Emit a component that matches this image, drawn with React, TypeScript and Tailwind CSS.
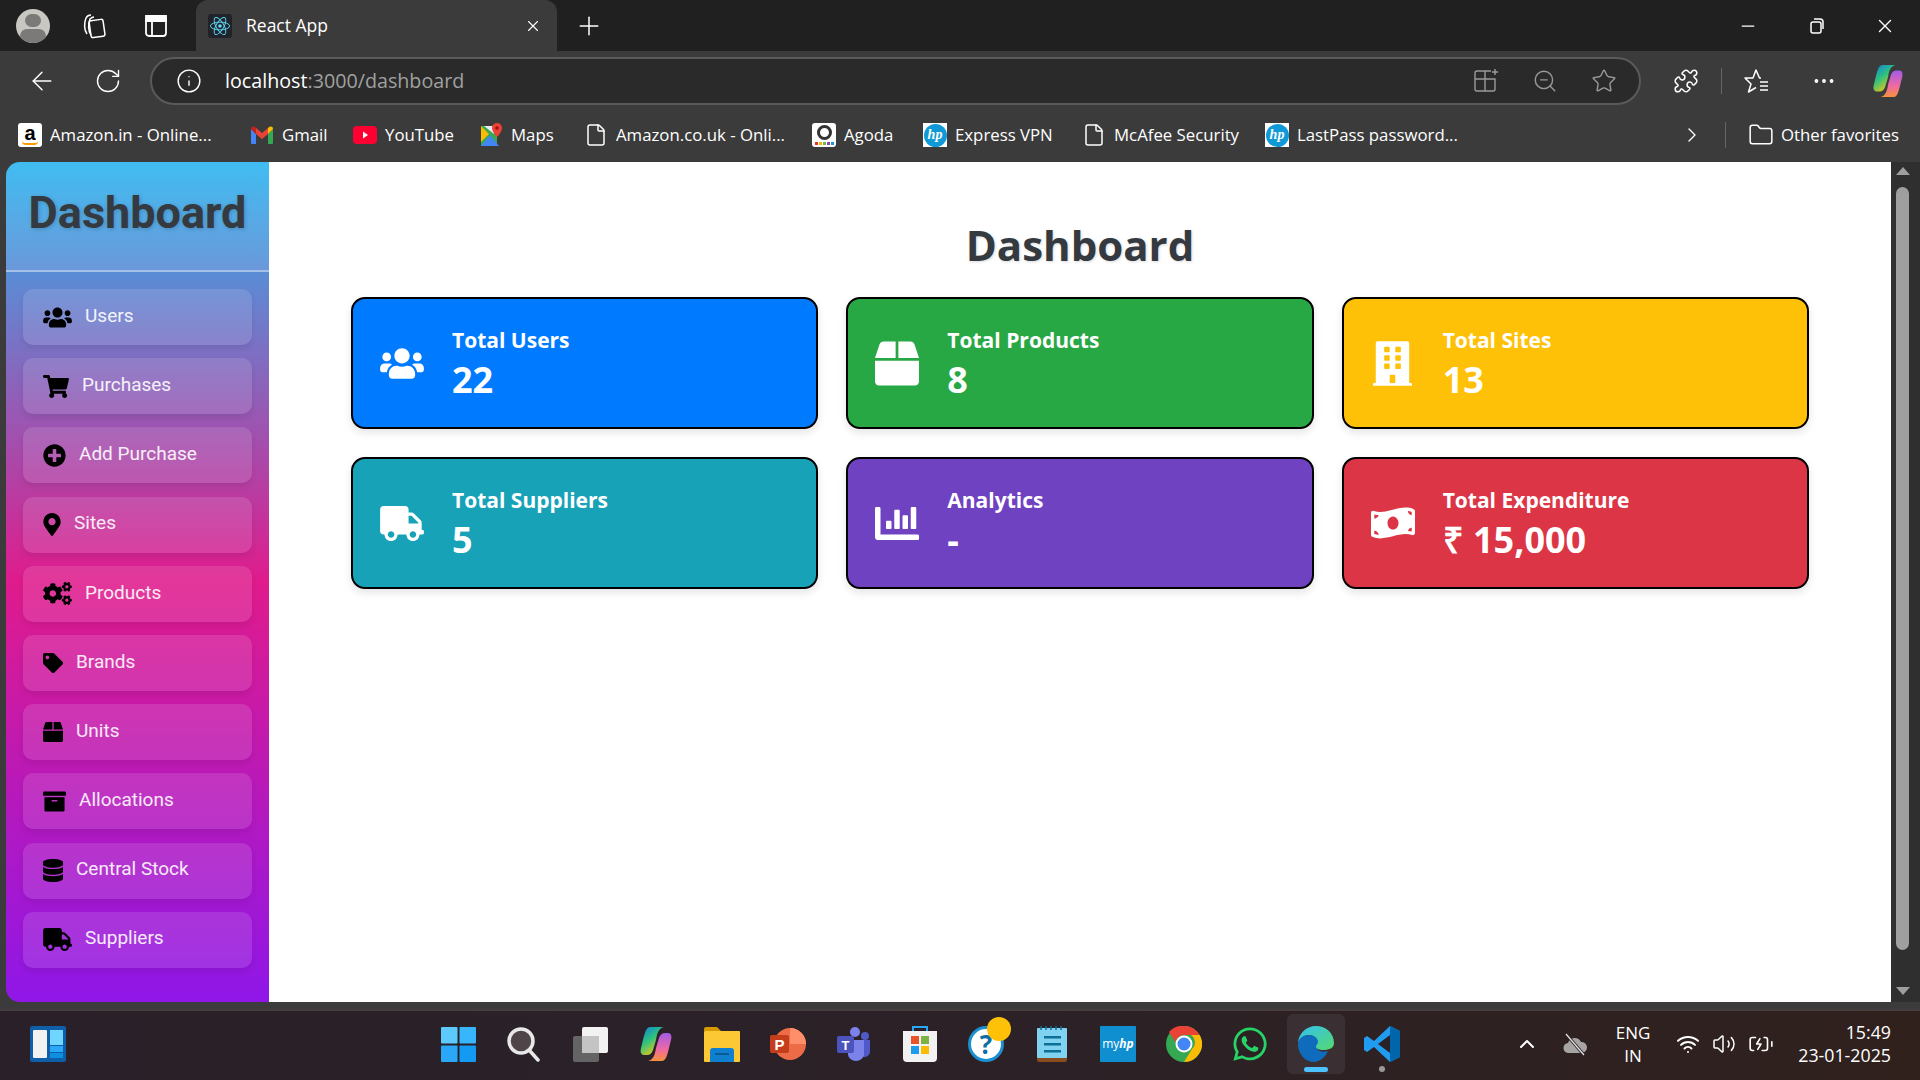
import React from 'react';
import {
  ArrowLeft, BatteryCharging, ChevronRight, ChevronUp, File, Folder, Info, Minus, MoreHorizontal,
  Plus, Puzzle, RotateCw, Star, Volume2, Wifi, X, ZoomOut,
} from 'lucide-react';
import {
  FaArchive, FaBox, FaBuilding, FaChartBar, FaCogs, FaDatabase, FaMapMarkerAlt, FaMoneyBillWave,
  FaPlusCircle, FaShoppingCart, FaTag, FaTruck, FaUsers, FaWhatsapp,
} from 'react-icons/fa';

const ui = "font-['Open_Sans',sans-serif]";

const menu = [
  { label: 'Users', icon: <FaUsers className="w-[29px] h-[23px]" /> },
  { label: 'Purchases', icon: <FaShoppingCart className="w-[26px] h-[23px]" /> },
  { label: 'Add Purchase', icon: <FaPlusCircle className="w-[23px] h-[23px]" /> },
  { label: 'Sites', icon: <FaMapMarkerAlt className="w-[18px] h-[23px]" /> },
  { label: 'Products', icon: <FaCogs className="w-[29px] h-[23px]" /> },
  { label: 'Brands', icon: <FaTag className="w-[20px] h-[20px]" /> },
  { label: 'Units', icon: <FaBox className="w-[20px] h-[20px]" /> },
  { label: 'Allocations', icon: <FaArchive className="w-[23px] h-[23px]" /> },
  { label: 'Central Stock', icon: <FaDatabase className="w-[20px] h-[23px]" /> },
  { label: 'Suppliers', icon: <FaTruck className="w-[29px] h-[23px]" /> },
];

const cards = [
  { title: 'Total Users', value: '22', bg: 'bg-[#007bff]', icon: <FaUsers className="w-[44px] h-[35px]" /> },
  { title: 'Total Products', value: '8', bg: 'bg-[#28a745]', icon: <FaBox className="w-[44px] h-[45px]" /> },
  { title: 'Total Sites', value: '13', bg: 'bg-[#ffc107]', icon: <FaBuilding className="w-[39px] h-[45px]" /> },
  { title: 'Total Suppliers', value: '5', bg: 'bg-[#17a2b8]', icon: <FaTruck className="w-[44px] h-[35px]" /> },
  { title: 'Analytics', value: '-', bg: 'bg-[#6f42c1]', icon: <FaChartBar className="w-[44px] h-[45px]" /> },
  { title: 'Total Expenditure', value: '₹ 15,000', bg: 'bg-[#dc3545]', icon: <FaMoneyBillWave className="w-[45px] h-[36px]" /> },
];

const AmazonIcon = () => (
  <div className="relative w-[24px] h-[24px] bg-white rounded-[3px] flex items-center justify-center text-black text-[20px] font-bold leading-none font-['Liberation_Sans',sans-serif] pb-[5px]">
    a
    <div className="absolute bottom-[2px] left-[4px] w-[16px] h-[4px] border-b-2 border-[#f90] rounded-b-full" />
  </div>
);

const GmailIcon = () => (
  <svg width="24" height="20" viewBox="0 0 24 20">
    <path d="M1 4v14a1 1 0 0 0 1 1h4V9z" fill="#4285f4" />
    <path d="M23 4v14a1 1 0 0 1-1 1h-4V9z" fill="#34a853" />
    <path d="M6 9v10h0V9l6 5 6-5V3l-6 5-6-5z" fill="#ea4335" />
    <path d="M1 4c0-3 3-3 5-1v6z" fill="#c5221f" />
    <path d="M23 4c0-3-3-3-5-1v6z" fill="#fbbc04" />
  </svg>
);

const YoutubeIcon = () => (
  <svg width="24" height="18" viewBox="0 0 24 18">
    <rect width="24" height="18" rx="4" fill="#ff0033" />
    <path d="M10 5.500l5 3.500-5 3.500z" fill="#fff" />
  </svg>
);

const MapsIcon = () => (
  <svg width="22" height="24" viewBox="0 0 22 24">
    <path d="M0 3h16v20H0z" fill="#34a853" />
    <path d="M0 23l9-11 9 11z" fill="#4285f4" />
    <path d="M0 3l8 8-8 8z" fill="#fbbc04" />
    <path d="M3 3h10v8z" fill="#e8eaed" />
    <path d="M16 0a5 5 0 0 0-5 5c0 4 5 9 5 9s5-5 5-9a5 5 0 0 0-5-5z" fill="#ea4335" />
    <circle cx="16" cy="5" r="1.800" fill="#a50e0e" />
  </svg>
);

const AgodaIcon = () => (
  <div className="w-[24px] h-[24px] bg-white rounded-[3px] flex flex-col items-center justify-center">
    <div className="w-[15px] h-[15px] rounded-full border-[3px] border-[#333]" />
    <div className="flex gap-[1px] mt-[2px]">
      <div className="w-[3px] h-[3px] bg-[#e4312b]" />
      <div className="w-[3px] h-[3px] bg-[#f7b500]" />
      <div className="w-[3px] h-[3px] bg-[#71b945]" />
      <div className="w-[3px] h-[3px] bg-[#8e44ad]" />
      <div className="w-[3px] h-[3px] bg-[#1b9ad6]" />
    </div>
  </div>
);

const HpIcon = () => (
  <div className="w-[24px] h-[24px] bg-white flex items-center justify-center">
    <div className="w-[23px] h-[23px] rounded-full bg-[#0f9ad7] text-white text-[14px] italic font-bold leading-none flex items-center justify-center font-['Liberation_Serif',serif]">hp</div>
  </div>
);

const DocIcon = () => <File className="w-[24px] h-[24px] text-white" strokeWidth={1.5} />;

const bookmarks = [
  { label: 'Amazon.in - Online...', w: 'w-[232px]', icon: <AmazonIcon /> },
  { label: 'Gmail', w: 'w-[103px]', icon: <GmailIcon /> },
  { label: 'YouTube', w: 'w-[128px]', icon: <YoutubeIcon /> },
  { label: 'Maps', w: 'w-[103px]', icon: <MapsIcon /> },
  { label: 'Amazon.co.uk - Onli...', w: 'w-[228px]', icon: <DocIcon /> },
  { label: 'Agoda', w: 'w-[111px]', icon: <AgodaIcon /> },
  { label: 'Express VPN', w: 'w-[159px]', icon: <HpIcon /> },
  { label: 'McAfee Security', w: 'w-[183px]', icon: <DocIcon /> },
  { label: 'LastPass password...', w: 'w-[220px]', icon: <HpIcon /> },
];

const CopilotIcon = ({ size }: { size: number }) => (
  <svg width={size} height={size} viewBox="0 0 36 36">
    <defs>
      <linearGradient id="copA" x1="0" y1="0" x2="0.600" y2="1">
        <stop offset="0" stopColor="#0f7fe0" />
        <stop offset="0.5" stopColor="#2ec27e" />
        <stop offset="1" stopColor="#f2c811" />
      </linearGradient>
      <linearGradient id="copB" x1="0.500" y1="0" x2="0.500" y2="1">
        <stop offset="0" stopColor="#a45be8" />
        <stop offset="0.6" stopColor="#f06aa0" />
        <stop offset="1" stopColor="#f7923a" />
      </linearGradient>
    </defs>
    <path d="M12 1h14c-5 1-7 6-8 13l-3 10c-1 3-3 5-6 5H6C3 29 2 26 3 22 6 11 7 1 12 1z" fill="url(#copA)" />
    <path d="M24 35H10c5-1 7-6 8-13l3-10c1-3 3-5 6-5h3c3 0 4 3 3 7-3 11-4 21-9 21z" fill="url(#copB)" />
  </svg>
);

const ReactIcon = () => (
  <div className="w-[24px] h-[24px] bg-[#20232a] rounded-[3px] flex items-center justify-center">
    <svg width="22" height="22" viewBox="-12 -12 24 24" fill="none" stroke="#61dafb" strokeWidth="1">
      <circle r="2" fill="#61dafb" stroke="none" />
      <ellipse rx="10.500" ry="4.200" />
      <ellipse rx="10.500" ry="4.200" transform="rotate(60)" />
      <ellipse rx="10.500" ry="4.200" transform="rotate(120)" />
    </svg>
  </div>
);

const taskbar = [
  <svg key="start" width="35" height="35" viewBox="0 0 36 36">
    <rect width="17" height="17" rx="1" fill="#5ccbfb" />
    <rect x="19" width="17" height="17" rx="1" fill="#38b6fb" />
    <rect y="19" width="17" height="17" rx="1" fill="#2aa8f8" />
    <rect x="19" y="19" width="17" height="17" rx="1" fill="#139bf4" />
  </svg>,
  <svg key="search" width="36" height="36" viewBox="0 0 36 36" fill="#4f4448" stroke="#e8e8e8" strokeWidth="3.500" strokeLinecap="round">
    <circle cx="15" cy="15" r="12" />
    <path d="M24 25l8 9" fill="none" />
  </svg>,
  <svg key="tasks" width="36" height="36" viewBox="0 0 36 36">
    <rect x="10" y="1" width="26" height="26" rx="2" fill="#f2f2f2" />
    <rect x="1" y="10" width="26" height="26" rx="2" fill="#6b6b6b" fillOpacity="0.900" />
    <rect x="10" y="10" width="17" height="17" fill="#c4c4c4" />
  </svg>,
  <CopilotIcon key="copilot" size={36} />,
  <svg key="files" width="36" height="36" viewBox="0 0 36 36">
    <path d="M0 3a2 2 0 0 1 2-2h11l4 4h-17z" fill="#d69a00" />
    <rect y="5" width="36" height="31" rx="1" fill="#fcc935" />
    <path d="M6 25a3 3 0 0 1 3-3h18a3 3 0 0 1 3 3v11H6z" fill="#0f7fd0" />
    <rect x="11" y="27" width="14" height="2" fill="#0a5a96" />
  </svg>,
  <svg key="ppt" width="36" height="36" viewBox="0 0 36 36">
    <circle cx="20" cy="18" r="16" fill="#ed6c47" />
    <path d="M20 2a16 16 0 0 1 16 16H20z" fill="#ff8f6b" />
    <rect x="0" y="9" width="19" height="18" rx="2" fill="#c43e1c" />
    <text x="9.500" y="24" textAnchor="middle" fontSize="15" fontWeight="700" fill="#fff" fontFamily="Liberation Sans">P</text>
  </svg>,
  <svg key="teams" width="36" height="36" viewBox="0 0 36 36">
    <circle cx="19" cy="6" r="5" fill="#7b83eb" />
    <circle cx="29" cy="10" r="4" fill="#5059c9" />
    <path d="M23 14h11v11c0 4-3 6-6 6h-5z" fill="#5059c9" />
    <path d="M12 14h16v14c0 4-4 7-8 7s-8-3-8-7z" fill="#7b83eb" />
    <rect x="1" y="10" width="17" height="17" rx="2" fill="#4b53bc" />
    <text x="9.500" y="24" textAnchor="middle" fontSize="13" fontWeight="700" fill="#fff" fontFamily="Liberation Sans">T</text>
  </svg>,
  <svg key="store" width="36" height="36" viewBox="0 0 36 36">
    <path d="M11 5V1h14v4" fill="none" stroke="#2aa8f8" strokeWidth="2" />
    <path d="M1 5h34v27a4 4 0 0 1-4 4H5a4 4 0 0 1-4-4z" fill="#f2f2f2" />
    <rect x="9" y="10" width="8" height="8" fill="#e8532b" />
    <rect x="19" y="10" width="8" height="8" fill="#7cb342" />
    <rect x="9" y="20" width="8" height="8" fill="#1e9bea" />
    <rect x="19" y="20" width="8" height="8" fill="#fbbc05" />
  </svg>,
  <div key="help" className="relative w-[36px] h-[36px]">
    <div className={`w-[36px] h-[36px] rounded-full bg-white border-[3px] border-[#1b8fd0] flex items-center justify-center text-[#0d6ea8] text-[26px] font-bold leading-none ${ui}`}>?</div>
    <div className="absolute -top-[9px] left-[19px] w-[24px] h-[24px] rounded-full bg-[#ffc107]" />
  </div>,
  <svg key="notes" width="30" height="36" viewBox="0 0 30 36">
    <rect y="2" width="30" height="34" rx="2" fill="#8a4b1f" />
    <rect y="2" width="30" height="30" rx="1" fill="#7fd3f0" />
    <path d="M4 0v4M9 0v4M14 0v4M19 0v4M24 0v4" stroke="#0e6f96" strokeWidth="1.500" />
    <rect x="7" y="10" width="17" height="2.500" fill="#0e6f96" />
    <rect x="7" y="17" width="17" height="2.500" fill="#0e6f96" />
    <rect x="7" y="24" width="17" height="2.500" fill="#0e6f96" />
  </svg>,
  <div key="myhp" className={`w-[36px] h-[36px] rounded-[1px] bg-[#0f8fd0] text-white text-[12px] flex items-center justify-center ${ui}`}>my<span className="italic font-bold">hp</span></div>,
  <svg key="chrome" width="36" height="36" viewBox="0 0 36 36">
    <circle cx="18" cy="18" r="18" fill="#34a853" />
    <path d="M18 0a18 18 0 0 1 15.600 9H18a9 9 0 0 0-8.800 7L3 6a18 18 0 0 1 15-6z" fill="#ea4335" />
    <path d="M33.600 9A18 18 0 0 1 18 36l8-13a9 9 0 0 0-1-14z" fill="#fbbc05" />
    <circle cx="18" cy="18" r="8.500" fill="#fff" />
    <circle cx="18" cy="18" r="6.500" fill="#4285f4" />
  </svg>,
  <FaWhatsapp key="wa" className="w-[38px] h-[38px] text-[#25d366]" />,
  <svg key="edge" width="36" height="36" viewBox="0 0 36 36">
    <defs>
      <linearGradient id="edgeA" x1="0" y1="0" x2="1" y2="1">
        <stop offset="0" stopColor="#35c1f1" />
        <stop offset="1" stopColor="#54d96f" />
      </linearGradient>
    </defs>
    <path d="M18 0c10 0 18 7 18 17 0 5-5 7-10 7-6 0-9-2-9-4 0-1 2-1 2-4 0-4-4-7-8-7-6 0-11 5-11 9C0 8 8 0 18 0z" fill="url(#edgeA)" />
    <path d="M0 18c0-5 5-9 11-9 5 0 9 3 9 7 0 2-2 3-2 4 0 4 5 7 12 5-3 7-9 11-14 11C7 36 0 28 0 18z" fill="#0f6cbd" />
  </svg>,
  <svg key="vscode" width="36" height="36" viewBox="0 0 36 36">
    <path d="M26 0l10 5v26l-10 5-16-15-7 5-3-2v-12l3-2 7 5z" fill="#1f9cf0" />
    <path d="M26 9L14 18l12 9z" fill="#2a2128" />
    <path d="M26 0l10 5v26l-10 5z" fill="#0065a9" />
  </svg>,
];

const Sidebar = () => (
  <aside className="w-[263px] ml-[6px] rounded-l-[14px] overflow-hidden flex flex-col bg-linear-to-b/srgb from-[#2bb5f0] via-[#e01b8c] to-[#8f17e8]">
    <div className="h-[110px] pt-[25px] bg-white/10 border-b-2 border-white/40 text-center text-[#343a40] text-[45px] font-bold leading-[52px] font-['Roboto',sans-serif] [text-shadow:1px_1px_4px_rgba(0,0,0,0.2)]">
      Dashboard
    </div>
    <nav className="flex flex-col gap-[13.2px] pt-[17px] px-[17px]">
      {menu.map((item) => (
        <div key={item.label} className="h-[56px] rounded-[10px] bg-white/12 shadow-[0_4px_6px_rgba(0,0,0,0.08)] flex items-center gap-[13px] pl-[20px] text-white/90 text-[19px] font-['Roboto',sans-serif]">
          <span className="text-black flex items-center">{item.icon}</span>
          <span className="pb-[2px]">{item.label}</span>
        </div>
      ))}
    </nav>
  </aside>
);

const Scrollbar = () => (
  <div className="w-[29px] bg-[#2f2f2f] flex flex-col items-center pr-[6px]">
    <div className="h-[25px] flex items-start justify-center pt-[5px]">
      <div className="w-0 h-0 border-x-[7px] border-x-transparent border-b-[8px] border-b-[#9f9f9f]" />
    </div>
    <div className="w-[13px] flex-1 bg-[#9f9f9f] rounded-full" />
    <div className="h-[52px] flex items-end justify-center pb-[7px]">
      <div className="w-0 h-0 border-x-[7px] border-x-transparent border-t-[8px] border-t-[#9f9f9f]" />
    </div>
  </div>
);

export default function App() {
  return (
    <div className="w-[1920px] h-[1080px] overflow-hidden flex flex-col bg-[#3b3b3b] text-white">
      {/* tab strip */}
      <div className="h-[51px] shrink-0 bg-[#202020] flex items-center">
        <div className="ml-[16px] w-[34px] h-[34px] rounded-full bg-[#c9c7c2] flex flex-col items-center overflow-hidden">
          <div className="w-[16px] h-[16px] rounded-full bg-[#7c7a78] mt-[5px]" />
          <div className="w-[26px] h-[16px] rounded-full bg-[#7c7a78] mt-[2px]" />
        </div>
        <svg className="ml-[30px]" width="26" height="26" viewBox="0 0 26 26" fill="none" stroke="#fff" strokeWidth="1.500">
          <rect x="10" y="7" width="14" height="17" rx="2" transform="rotate(-8 17 15)" />
          <path d="M7 21C4 17 4 10 6 5c1-2 3-3 5-3M11 22C8 18 8 11 10 6c1-1 2-2 4-2" />
        </svg>
        <svg className="ml-[38px]" width="24" height="24" viewBox="0 0 24 24" fill="none" stroke="#fff" strokeWidth="1.800">
          <rect x="2" y="2" width="20" height="20" rx="3" />
          <path d="M2 7h20M8 7v15" />
          <path d="M2 2h20v5H2z" fill="#fff" />
        </svg>
        <div className="ml-[28px] self-end w-[361px] h-[51px] bg-[#3b3b3b] rounded-t-[12px] flex items-center pl-[12px]">
          <ReactIcon />
          <span className={`ml-[14px] text-[17.500px] ${ui}`}>React App</span>
          <X className="w-[18px] h-[18px] ml-auto mr-[15px]" strokeWidth={1.5} />
        </div>
        <Plus className="ml-[17px] w-[30px] h-[30px]" strokeWidth={1.2} />
        <Minus className="ml-auto w-[20px] h-[20px]" strokeWidth={1.5} />
        <svg className="ml-[51px]" width="16" height="18" viewBox="0 0 16 18" fill="none" stroke="#fff" strokeWidth="1.500">
          <rect x="2" y="5" width="10" height="11" rx="2" />
          <path d="M5 2h6a3 3 0 0 1 3 3v7" />
        </svg>
        <X className="ml-[49px] mr-[24px] w-[22px] h-[22px]" strokeWidth={1.5} />
      </div>

      {/* address bar */}
      <div className="h-[57px] shrink-0 flex items-center pl-[9px] pt-[3px]">
        <div className="w-[66px] flex justify-center"><ArrowLeft className="w-[30px] h-[30px]" strokeWidth={1.2} /></div>
        <div className="w-[66px] flex justify-center"><RotateCw className="w-[28px] h-[28px]" strokeWidth={1.2} /></div>
        <div className="ml-[9px] w-[1491px] h-[48px] rounded-full border-2 border-[#5a5a5a] bg-[#2a2a2a] flex items-center pl-[24px] pr-[22px]">
          <Info className="w-[26px] h-[26px]" strokeWidth={1.3} />
          <span className={`ml-[23px] text-[19.700px] ${ui}`}>localhost<span className="text-[#a0a0a0]">:3000/dashboard</span></span>
          <div className="ml-auto flex items-center gap-[33px] text-[#9a9a9a]">
            <svg width="26" height="26" viewBox="0 0 26 26" fill="none" stroke="currentColor" strokeWidth="1.400">
              <path d="M18 3H4a2 2 0 0 0-2 2v16a2 2 0 0 0 2 2h16a2 2 0 0 0 2-2V11H2M12 3v20M22 1v6M19 4h6" />
            </svg>
            <ZoomOut className="w-[26px] h-[26px]" strokeWidth={1.3} />
            <Star className="w-[26px] h-[26px]" strokeWidth={1.3} />
          </div>
        </div>
        <Puzzle className="ml-[32px] w-[26px] h-[26px]" strokeWidth={1.4} />
        <div className="ml-[22px] w-px h-[26px] bg-[#666]" />
        <svg className="ml-[22px]" width="26" height="26" viewBox="0 0 26 26" fill="none" stroke="#fff" strokeWidth="1.500" strokeLinejoin="round">
          <path d="M17 10h-1.500L12 2 9 10H1l6 6-2.500 8L12 19.500M16 14h8M16 18h8M16 22h8" />
        </svg>
        <MoreHorizontal className="ml-[41px] w-[26px] h-[26px]" strokeWidth={1.5} />
        <div className="ml-[34px]"><CopilotIcon size={34} /></div>
      </div>

      {/* bookmarks */}
      <div className="h-[54px] shrink-0 flex items-center pl-[18px]">
        {bookmarks.map((b) => (
          <div key={b.label} className={`${b.w} flex items-center gap-[8px] text-[16.800px] ${ui}`}>
            {b.icon}
            <span>{b.label}</span>
          </div>
        ))}
        <ChevronRight className="ml-[195px] w-[24px] h-[24px]" strokeWidth={1.4} />
        <div className="ml-[21px] w-px h-[26px] bg-[#666]" />
        <Folder className="ml-[22px] w-[26px] h-[26px]" strokeWidth={1.4} />
        <span className={`ml-[7px] text-[16.800px] ${ui}`}>Other favorites</span>
      </div>

      {/* page */}
      <div className="h-[840px] shrink-0 flex">
        <Sidebar />
        <main className="flex-1 bg-white pt-[54px] px-[82px]">
          <h1 className={`text-center text-[#343a40] text-[42px] font-bold leading-[57px] [text-shadow:1px_1px_3px_rgba(0,0,0,0.15)] ${ui}`}>Dashboard</h1>
          <div className="mt-[24px] grid grid-cols-3 gap-x-[28px] gap-y-[28px]">
            {cards.map((c) => (
              <div key={c.title} className={`${c.bg} h-[132px] rounded-[14px] border-2 border-black shadow-[0_4px_8px_rgba(0,0,0,0.1)] flex items-center pl-[27px] text-white`}>
                <div className="w-[44px] flex justify-center">{c.icon}</div>
                <div className={`ml-[28px] ${ui}`}>
                  <div className="text-[21px] font-bold leading-[30px]">{c.title}</div>
                  <div className="mt-[3px] text-[36px] font-bold leading-[44px]">{c.value}</div>
                </div>
              </div>
            ))}
          </div>
        </main>
        <Scrollbar />
      </div>

      {/* taskbar */}
      <div className="h-[7px] shrink-0 bg-[#3b3b3b]" />
      <div className={`flex-1 border-t-2 border-[#463d3f] bg-linear-to-r/srgb from-[#2a2029] via-[#2b2127] to-[#30211d] flex items-center pb-[3px] ${ui}`}>
        <svg className="ml-[30px]" width="36" height="36" viewBox="0 0 36 36">
          <rect width="36" height="36" rx="2" fill="#0f5ea8" />
          <rect x="3" y="4" width="14" height="28" rx="1" fill="#f2f2f2" />
          <rect x="20" y="4" width="13" height="15" fill="#6fd6ff" />
          <rect x="20" y="20" width="13" height="6" fill="#2aa8f8" />
          <rect x="20" y="27" width="13" height="5" fill="#0f8fe0" />
        </svg>
        <div className="ml-[359px] flex">
          {taskbar.map((icon, i) => (
            <div key={i} className="relative w-[66px] h-[60px] flex items-center justify-center">
              {i === 13 && <div className="absolute inset-y-0 inset-x-[4px] rounded-[6px] bg-[#3a3034]" />}
              <div className="relative flex">{icon}</div>
              {i === 13 && <div className="absolute bottom-[2px] w-[24px] h-[5px] rounded-full bg-[#4cc2ff]" />}
              {i === 14 && <div className="absolute bottom-[2px] w-[6px] h-[6px] rounded-full bg-[#9a9a9a]" />}
            </div>
          ))}
        </div>
        <ChevronUp className="ml-[100px] w-[24px] h-[24px]" strokeWidth={2} />
        <svg className="ml-[23px]" width="26" height="26" viewBox="0 0 26 26">
          <path d="M7 22a5 5 0 0 1-1-10 7 7 0 0 1 13-1 5.500 5.500 0 0 1 1 11z" fill="#a8a4a4" />
          <path d="M4 3l18 21" stroke="#2a2128" strokeWidth="3" />
          <path d="M4 3l18 21" stroke="#e8e8e8" strokeWidth="1.200" />
        </svg>
        <div className="ml-[25px] w-[40px] flex justify-center text-center text-[17px] leading-[23px]">ENG<br />IN</div>
        <Wifi className="ml-[23px] w-[24px] h-[24px]" strokeWidth={2} />
        <Volume2 className="ml-[12px] w-[24px] h-[24px]" strokeWidth={1.5} />
        <BatteryCharging className="ml-[12px] w-[26px] h-[26px]" strokeWidth={1.5} />
        <div className="ml-auto mr-[29px] text-right text-[17.800px] leading-[23px] pb-[1px]">15:49<br />23-01-2025</div>
      </div>
    </div>
  );
}
